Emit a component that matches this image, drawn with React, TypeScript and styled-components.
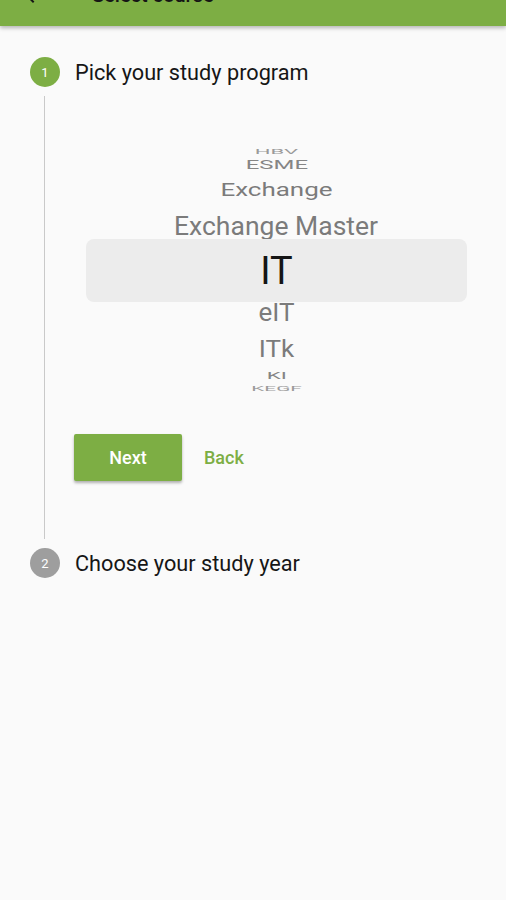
import React from "react"
import styled, { createGlobalStyle } from "styled-components"

const green = "#7dae44"

const GlobalStyle = createGlobalStyle`
  html, body {
    margin: 0;
    padding: 0;
    background: #fafafa;
    font-family: Roboto, "Liberation Sans", sans-serif;
  }
`

const Page = styled.div`
  width: 506px;
  min-height: 900px;
  background: #fafafa;
  overflow: hidden;
`

const AppBar = styled.header`
  height: 56px;
  margin-top: -30px;
  display: flex;
  align-items: center;
  padding: 0 21px 6px;
  box-sizing: border-box;
  background: ${green};
  box-shadow: 0 2px 4px rgba(0, 0, 0, 0.28);
  position: relative;
`

const BarTitle = styled.h1`
  margin: 0 0 0 47px;
  font-size: 20px;
  font-weight: 500;
  color: #151515;
`

const Stepper = styled.div`
  padding: 31px 0 0 30px;
`

const StepHeader = styled.div`
  height: 30px;
  display: flex;
  align-items: center;
  gap: 15px;
`

const StepCircle = styled.div<{ $active?: boolean }>`
  width: 30px;
  height: 30px;
  border-radius: 50%;
  background: ${props => (props.$active ? green : "#9e9e9e")};
  color: #fff;
  font-size: 13px;
  display: flex;
  align-items: center;
  justify-content: center;
`

const StepTitle = styled.div`
  font-size: 21.7px;
  font-weight: 400;
  color: #161616;
`

const StepContent = styled.div`
  margin: 9px 0 9px 14px;
  border-left: 1px solid #c9c9c9;
  padding: 48px 0 58px 29px;
`

const Picker = styled.div`
  width: 381px;
  margin-left: 12px;
  display: flex;
  flex-direction: column;
`

const WheelRow = styled.div<{ $h: number; $clip?: boolean }>`
  height: ${props => props.$h}px;
  display: flex;
  align-items: center;
  justify-content: center;
  overflow: ${props => (props.$clip ? "hidden" : "visible")};
`

const WheelText = styled.span<{ $color: string }>`
  font-size: 26px;
  line-height: 1;
  color: ${props => props.$color};
  white-space: nowrap;
  display: inline-block;
`

const SelectedBand = styled.div`
  height: 63px;
  border-radius: 8px;
  background: #ececec;
  display: flex;
  align-items: center;
  justify-content: center;
`

const SelectedText = styled.span`
  font-size: 38px;
  line-height: 1;
  color: #151515;
`

const Actions = styled.div`
  margin-top: 40px;
  display: flex;
  align-items: center;
  gap: 6px;
`

const PrimaryButton = styled.button`
  width: 108px;
  height: 47px;
  border: none;
  border-radius: 2px;
  background: ${green};
  color: #fff;
  font-family: inherit;
  font-size: 18px;
  font-weight: 500;
  box-shadow: 0 2px 3px rgba(0, 0, 0, 0.3);
`

const TextButton = styled.button`
  height: 47px;
  padding: 0 16px;
  border: none;
  background: transparent;
  color: ${green};
  font-family: inherit;
  font-size: 18px;
  font-weight: 500;
`

interface WheelItem {
  label: string
  h: number
  sx: number
  sy: number
  dy: number
  color: string
  clip?: boolean
}

const above: WheelItem[] = [
  { label: "HBV", h: 14, sx: 0.85, sy: 0.3, dy: 0, color: "#9a9a9a" },
  { label: "ESME", h: 20, sx: 0.92, sy: 0.47, dy: -3, color: "#858585" },
  { label: "Exchange", h: 28, sx: 1, sy: 0.7, dy: -2, color: "#7b7b7b" },
  { label: "Exchange Master", h: 33, sx: 1.02, sy: 1, dy: 3, color: "#7b7b7b", clip: true },
]

const below: WheelItem[] = [
  { label: "eIT", h: 24, sx: 1, sy: 0.98, dy: -2, color: "#7b7b7b" },
  { label: "ITk", h: 40, sx: 1, sy: 0.9, dy: 3, color: "#7b7b7b" },
  { label: "KI", h: 18, sx: 0.86, sy: 0.38, dy: 1, color: "#858585" },
  { label: "KEGF", h: 10, sx: 0.8, sy: 0.27, dy: 0, color: "#9a9a9a" },
]

const Row = ({ item }: { item: WheelItem }) => (
  <WheelRow $h={item.h} $clip={item.clip}>
    <WheelText
      $color={item.color}
      style={{ transform: `translateY(${item.dy}px) scale(${item.sx}, ${item.sy})` }}
    >
      {item.label}
    </WheelText>
  </WheelRow>
)

const BackIcon = () => (
  <svg width="24" height="24" viewBox="0 0 24 24">
    <path fill="#151515" d="M20 11H7.83l5.59-5.59L12 4l-8 8 8 8 1.41-1.41L7.83 13H20v-2z" />
  </svg>
)

const App = () => {
  return (
    <Page>
      <GlobalStyle />
      <AppBar>
        <BackIcon />
        <BarTitle>Select course</BarTitle>
      </AppBar>
      <Stepper>
        <StepHeader>
          <StepCircle $active>1</StepCircle>
          <StepTitle>Pick your study program</StepTitle>
        </StepHeader>
        <StepContent>
          <Picker>
            {above.map(item => <Row key={item.label} item={item} />)}
            <SelectedBand>
              <SelectedText>IT</SelectedText>
            </SelectedBand>
            {below.map(item => <Row key={item.label} item={item} />)}
          </Picker>
          <Actions>
            <PrimaryButton>Next</PrimaryButton>
            <TextButton>Back</TextButton>
          </Actions>
        </StepContent>
        <StepHeader>
          <StepCircle>2</StepCircle>
          <StepTitle>Choose your study year</StepTitle>
        </StepHeader>
      </Stepper>
    </Page>
  )
}

export default App
